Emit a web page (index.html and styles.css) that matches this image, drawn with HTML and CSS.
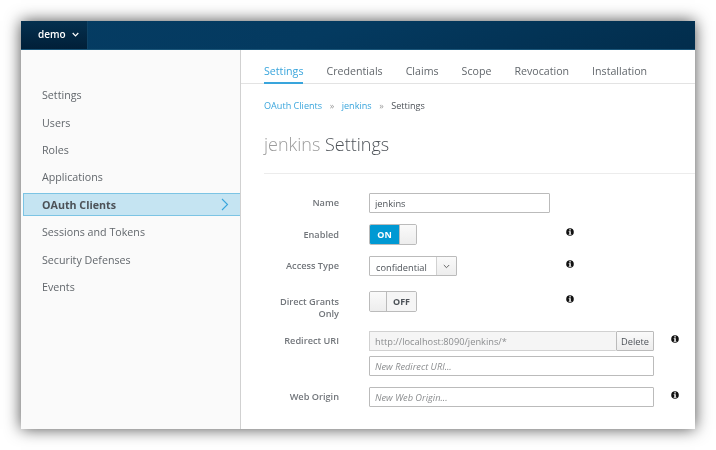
FILE: index.html
```html
<!DOCTYPE html>
<html lang="en">
<head>
  <meta charset="UTF-8" />
  <title>jenkins Settings</title>
  <link rel="stylesheet" href="styles.css">
</head>
<body>
  <div class="window">
    <header class="topbar">
      <div class="realm">demo
        <svg class="realm-caret" width="7" height="5" viewBox="0 0 7 5"><path d="M.7 1l2.8 2.8L6.3 1" fill="none" stroke="#fff" stroke-width="1.2"/></svg>
      </div>
    </header>
    <div class="page">
      <nav class="sidebar">
        <a href="#">Settings</a>
        <a href="#">Users</a>
        <a href="#">Roles</a>
        <a href="#">Applications</a>
        <a href="#" class="active">OAuth Clients
          <svg width="8" height="13" viewBox="0 0 8 13"><path d="M1 1l5.5 5.5L1 12" fill="none" stroke="#39a5dc" stroke-width="1.1"/></svg>
        </a>
        <a href="#">Sessions and Tokens</a>
        <a href="#">Security Defenses</a>
        <a href="#">Events</a>
      </nav>
      <main class="content">
        <div class="tabs">
          <a href="#" class="active">Settings</a>
          <a href="#">Credentials</a>
          <a href="#">Claims</a>
          <a href="#">Scope</a>
          <a href="#">Revocation</a>
          <a href="#">Installation</a>
        </div>
        <div class="breadcrumb">
          <a href="#">OAuth Clients</a><span class="sep">»</span><a href="#">jenkins</a><span class="sep">»</span><span>Settings</span>
        </div>
        <h1><span class="muted">jenkins</span> Settings</h1>
        <form class="form">
          <div class="row row-name">
            <label>Name</label>
            <div class="field"><input class="input input-short" type="text" value="jenkins"></div>
          </div>
          <div class="row row-enabled">
            <label>Enabled</label>
            <div class="field">
              <div class="toggle"><span class="toggle-on">ON</span><span class="toggle-knob"></span></div>
            </div>
            <svg class="info" viewBox="0 0 8 8"><circle cx="4" cy="4" r="3.8" fill="#111"/><rect x="3.3" y="1.2" width="1.5" height="1.3" fill="#fff"/><path d="M2.7 3.2h2.1v2.7h.6v.9H2.7v-.9h.6V4.1h-.6z" fill="#fff"/></svg>
          </div>
          <div class="row row-access">
            <label>Access Type</label>
            <div class="field">
              <div class="select"><span class="select-value">confidential</span><span class="select-caret"><svg width="7" height="5" viewBox="0 0 7 5"><path d="M.8 1l2.7 2.7L6.2 1" fill="none" stroke="#555" stroke-width=".9"/></svg></span></div>
            </div>
            <svg class="info" viewBox="0 0 8 8"><circle cx="4" cy="4" r="3.8" fill="#111"/><rect x="3.3" y="1.2" width="1.5" height="1.3" fill="#fff"/><path d="M2.7 3.2h2.1v2.7h.6v.9H2.7v-.9h.6V4.1h-.6z" fill="#fff"/></svg>
          </div>
          <div class="row row-direct">
            <label>Direct Grants Only</label>
            <div class="field">
              <div class="toggle"><span class="toggle-knob"></span><span class="toggle-off">OFF</span></div>
            </div>
            <svg class="info" viewBox="0 0 8 8"><circle cx="4" cy="4" r="3.8" fill="#111"/><rect x="3.3" y="1.2" width="1.5" height="1.3" fill="#fff"/><path d="M2.7 3.2h2.1v2.7h.6v.9H2.7v-.9h.6V4.1h-.6z" fill="#fff"/></svg>
          </div>
          <div class="row row-redirect">
            <label>Redirect URI</label>
            <div class="field field-wide">
              <div class="input-group">
                <input class="input input-readonly" type="text" value="http://localhost:8090/jenkins/*" readonly>
                <button class="btn" type="button">Delete</button>
              </div>
              <input class="input" type="text" placeholder="New Redirect URI...">
            </div>
            <svg class="info" viewBox="0 0 8 8"><circle cx="4" cy="4" r="3.8" fill="#111"/><rect x="3.3" y="1.2" width="1.5" height="1.3" fill="#fff"/><path d="M2.7 3.2h2.1v2.7h.6v.9H2.7v-.9h.6V4.1h-.6z" fill="#fff"/></svg>
          </div>
          <div class="row row-origin">
            <label>Web Origin</label>
            <div class="field field-wide"><input class="input" type="text" placeholder="New Web Origin..."></div>
            <svg class="info" viewBox="0 0 8 8"><circle cx="4" cy="4" r="3.8" fill="#111"/><rect x="3.3" y="1.2" width="1.5" height="1.3" fill="#fff"/><path d="M2.7 3.2h2.1v2.7h.6v.9H2.7v-.9h.6V4.1h-.6z" fill="#fff"/></svg>
          </div>
        </form>
      </main>
    </div>
  </div>
</body>
</html>
```
FILE: styles.css
```css
:root {
  --blue: #39a5dc;
  --text: #4d5258;
  --label: #72767b;
  --border: #bbb;
}

html, body {
  height: 100%;
}

body {
  margin: 0;
  background: #fff;
  font-family: "Open Sans", Arial, sans-serif;
  font-size: 10.5px;
  color: var(--text);
  overflow: hidden;
}

a {
  text-decoration: none;
}

.window {
  width: 674px;
  height: 408px;
  margin: 21px;
  display: flex;
  flex-direction: column;
  overflow: hidden;
  box-sizing: border-box;
  background: #fff;
  filter: blur(0.35px);
}

body::before {
  content: "";
  position: fixed;
  left: 21px;
  top: 21px;
  width: 674px;
  height: 408px;
  box-shadow: 0 0 15px rgba(0, 0, 0, 0.7);
  z-index: -1;
}

.topbar {
  height: 29px;
  flex: none;
  background: linear-gradient(160deg, #053c63 0%, #043a60 45%, #022d4c 100%);
  border-bottom: 1px solid #1a5579;
  box-sizing: border-box;
  display: flex;
}

.realm {
  width: 67px;
  box-sizing: border-box;
  padding: 0 0 2px 17px;
  display: flex;
  align-items: center;
  gap: 6px;
  background: linear-gradient(#04304f, #011f38);
  border-right: 1px solid #0f4366;
  color: #fff;
  font-size: 10px;
  font-weight: 600;
}

.page {
  flex: 1;
  display: flex;
  min-height: 0;
}

.sidebar {
  width: 220px;
  flex: none;
  box-sizing: border-box;
  padding: 31.4px 0 0 2px;
  background: #fafafa;
  border-right: 1px solid #d1d1d1;
  display: flex;
  flex-direction: column;
}

.sidebar a {
  height: 27.43px;
  flex: none;
  box-sizing: border-box;
  padding-left: 19px;
  display: flex;
  align-items: center;
  justify-content: space-between;
  color: #62676c;
  font-size: 10.7px;
}

.sidebar a.active {
  height: 23px;
  margin: 2.2px 0;
  background: #c5e4f2;
  border: 1px solid #7cc4e4;
  border-right: 0;
  padding: 0 11px 0 18px;
  color: var(--text);
  font-weight: 700;
}

.content {
  flex: 1;
  min-width: 0;
}

.tabs {
  height: 34px;
  box-sizing: border-box;
  padding-left: 23px;
  display: flex;
  gap: 23px;
  border-bottom: 1px solid #e3e3e3;
}

.tabs a {
  height: 33px;
  box-sizing: border-box;
  padding-top: 13px;
  color: #62676c;
  font-size: 10.65px;
  line-height: 16px;
}

.tabs a.active {
  color: var(--blue);
  border-bottom: 2px solid var(--blue);
  margin-bottom: -1px;
  height: 34px;
}

.breadcrumb {
  padding: 15px 0 0 23px;
  display: flex;
  line-height: 14px;
  font-size: 9.1px;
}

.breadcrumb a {
  color: var(--blue);
}

.breadcrumb .sep {
  margin: 0 7.5px;
  color: #9c9c9c;
}

h1 {
  margin: 19px 0 0 23px;
  padding-bottom: 17px;
  border-bottom: 1px solid #ececec;
  font-size: 18px;
  line-height: 24px;
  font-weight: 300;
  color: #4d5258;
}

h1 .muted {
  color: #9c9c9c;
}

.form {
  padding: 19px 0 0 23px;
}

.row {
  display: flex;
  align-items: flex-start;
}

.row label {
  width: 75px;
  margin-right: 30px;
  flex: none;
  text-align: right;
  color: var(--label);
  font-size: 9.2px;
  font-weight: 600;
  line-height: 12px;
  padding-top: 4px;
}

.row-enabled label,
.row-direct label {
  padding-top: 5px;
}

.field {
  width: 197px;
  flex: none;
}

.field-wide {
  width: 285px;
  display: flex;
  flex-direction: column;
  gap: 5px;
}

.row-enabled {
  margin-top: 11px;
}

.row-access {
  margin-top: 11px;
}

.row-direct {
  margin-top: 15px;
  height: 40px;
}

.row-origin {
  margin-top: 11px;
}

.input {
  display: block;
  width: 100%;
  height: 20px;
  box-sizing: border-box;
  padding: 0 5px;
  border: 1px solid var(--border);
  border-radius: 1px;
  background: #fff;
  color: #4d5258;
  font: 9.25px "Open Sans", Arial, sans-serif;
  outline: 0;
}

.input::placeholder {
  color: #8b8d8f;
  font-style: italic;
  opacity: 1;
}

.input-short {
  width: 181px;
}

.input-readonly {
  flex: 1;
  min-width: 0;
  background: #f5f5f5;
  color: #8b8d8f;
  border-color: #d1d1d1;
  border-right: 0;
}

.input-group {
  display: flex;
}

.btn {
  width: 38px;
  height: 20px;
  padding: 0;
  box-sizing: border-box;
  border: 1px solid #bbb;
  border-radius: 1px;
  background: linear-gradient(#fafafa, #ededed);
  color: #4d5258;
  font: 9.25px "Open Sans", Arial, sans-serif;
}

.toggle {
  width: 48px;
  height: 21px;
  box-sizing: border-box;
  display: flex;
  border: 1px solid #bbb;
  border-radius: 2px;
  overflow: hidden;
  background: #fff;
  font-size: 9px;
  font-weight: 700;
  line-height: 19px;
  text-align: center;
}

.toggle-on {
  flex: 1;
  background: #0099d3;
  color: #fff;
}

.toggle-off {
  flex: 1;
  background: #f5f5f5;
  color: #4d5258;
}

.toggle-knob {
  width: 16px;
  background: linear-gradient(#fafafa, #ededed);
}

.toggle-knob:first-child {
  border-right: 1px solid #bbb;
}

.toggle-knob:last-child {
  border-left: 1px solid #bbb;
}

.select {
  width: 88px;
  height: 20px;
  box-sizing: border-box;
  display: flex;
  border: 1px solid var(--border);
  border-radius: 1px;
  font-size: 9.25px;
  line-height: 21px;
}

.select-value {
  flex: 1;
  padding-left: 6px;
}

.select-caret {
  width: 19px;
  display: flex;
  align-items: center;
  justify-content: center;
  border-left: 1px solid #d1d1d1;
  background: linear-gradient(#fafafa, #ededed);
}

.info {
  width: 8px;
  height: 8px;
  flex: none;
  margin-top: 4px;
}

.field-wide + .info {
  margin-left: 17px;
}
```
